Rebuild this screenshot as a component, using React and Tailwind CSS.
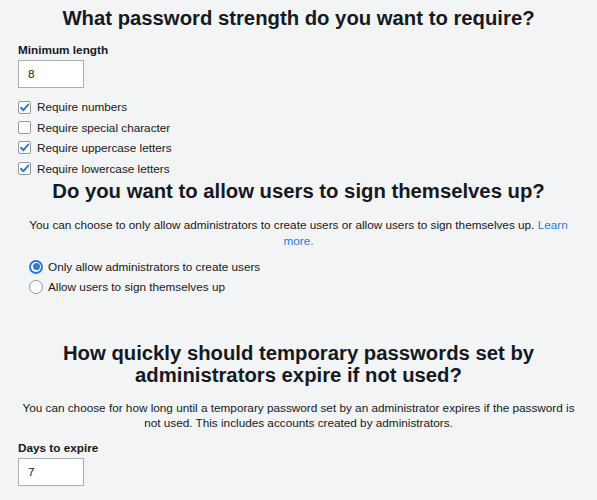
import React from "react";

function Check({ checked, label }) {
  return (
    <div className="flex items-center h-[20.4px]">
      <span className="w-[13px] h-[13px] border border-[#9a9a9a] bg-white rounded-[2px] flex items-center justify-center">
        {checked && (
          <svg width="11" height="11" viewBox="0 0 11 11">
            <path d="M2 5.8 L4.4 8.2 L9.2 2.6" fill="none" stroke="#2b7bd9" strokeWidth="2" strokeLinecap="round" strokeLinejoin="round" />
          </svg>
        )}
      </span>
      <span className="ml-[6px] text-[11.75px]">{label}</span>
    </div>
  );
}

function Radio({ checked, label }) {
  return (
    <div className="flex items-center h-[20px]">
      {checked ? (
        <span className="w-[14px] h-[14px] rounded-full border-[2px] border-[#2b7bd9] bg-white flex items-center justify-center">
          <span className="w-[7px] h-[7px] rounded-full bg-[#2b7bd9]" />
        </span>
      ) : (
        <span className="w-[14px] h-[14px] rounded-full border border-[#9a9a9a] bg-white" />
      )}
      <span className="ml-[5px] text-[11.75px]">{label}</span>
    </div>
  );
}

export default function App() {
  return (
    <div
      className="min-h-[500px] bg-[#f2f4f5] px-[18px] pt-[7px] text-[#16191f]"
      style={{ fontFamily: '"Liberation Sans", Arial, sans-serif' }}
    >
      <h1 className="text-[20.3px] leading-[22px] font-bold text-center">
        What password strength do you want to require?
      </h1>
      <div className="mt-[13px] text-[11.75px] leading-[16px] font-bold">Minimum length</div>
      <div className="mt-[2px] w-[66px] h-[28px] bg-white border border-[#aab0b4] flex items-center pl-[9px] text-[11.75px]">
        8
      </div>
      <div className="mt-[9px]">
        <Check checked label="Require numbers" />
        <Check label="Require special character" />
        <Check checked label="Require uppercase letters" />
        <Check checked label="Require lowercase letters" />
      </div>
      <h2 className="mt-[1px] text-[20.3px] leading-[22px] font-bold text-center">
        Do you want to allow users to sign themselves up?
      </h2>
      <p className="mt-[15px] text-[11.75px] leading-[16px] text-center">
        You can choose to only allow administrators to create users or allow users to sign themselves up.{" "}
        <a className="text-[#2b7bd9]">Learn</a> <a className="text-[#2b7bd9]">more.</a>
      </p>
      <div className="mt-[8px] pl-[11px]">
        <Radio checked label="Only allow administrators to create users" />
        <Radio label="Allow users to sign themselves up" />
      </div>
      <h2 className="mt-[45px] text-[20.3px] leading-[22px] font-bold text-center px-[40px]">
        How quickly should temporary passwords set by administrators expire if not used?
      </h2>
      <p className="mt-[14px] text-[11.75px] leading-[15px] text-center">
        You can choose for how long until a temporary password set by an administrator expires if the password is
        not used. This includes accounts created by administrators.
      </p>
      <div className="mt-[10px] text-[11.75px] leading-[16px] font-bold">Days to expire</div>
      <div className="mt-[2px] w-[66px] h-[28px] bg-white border border-[#aab0b4] flex items-center pl-[9px] text-[11.75px]">
        7
      </div>
    </div>
  );
}
